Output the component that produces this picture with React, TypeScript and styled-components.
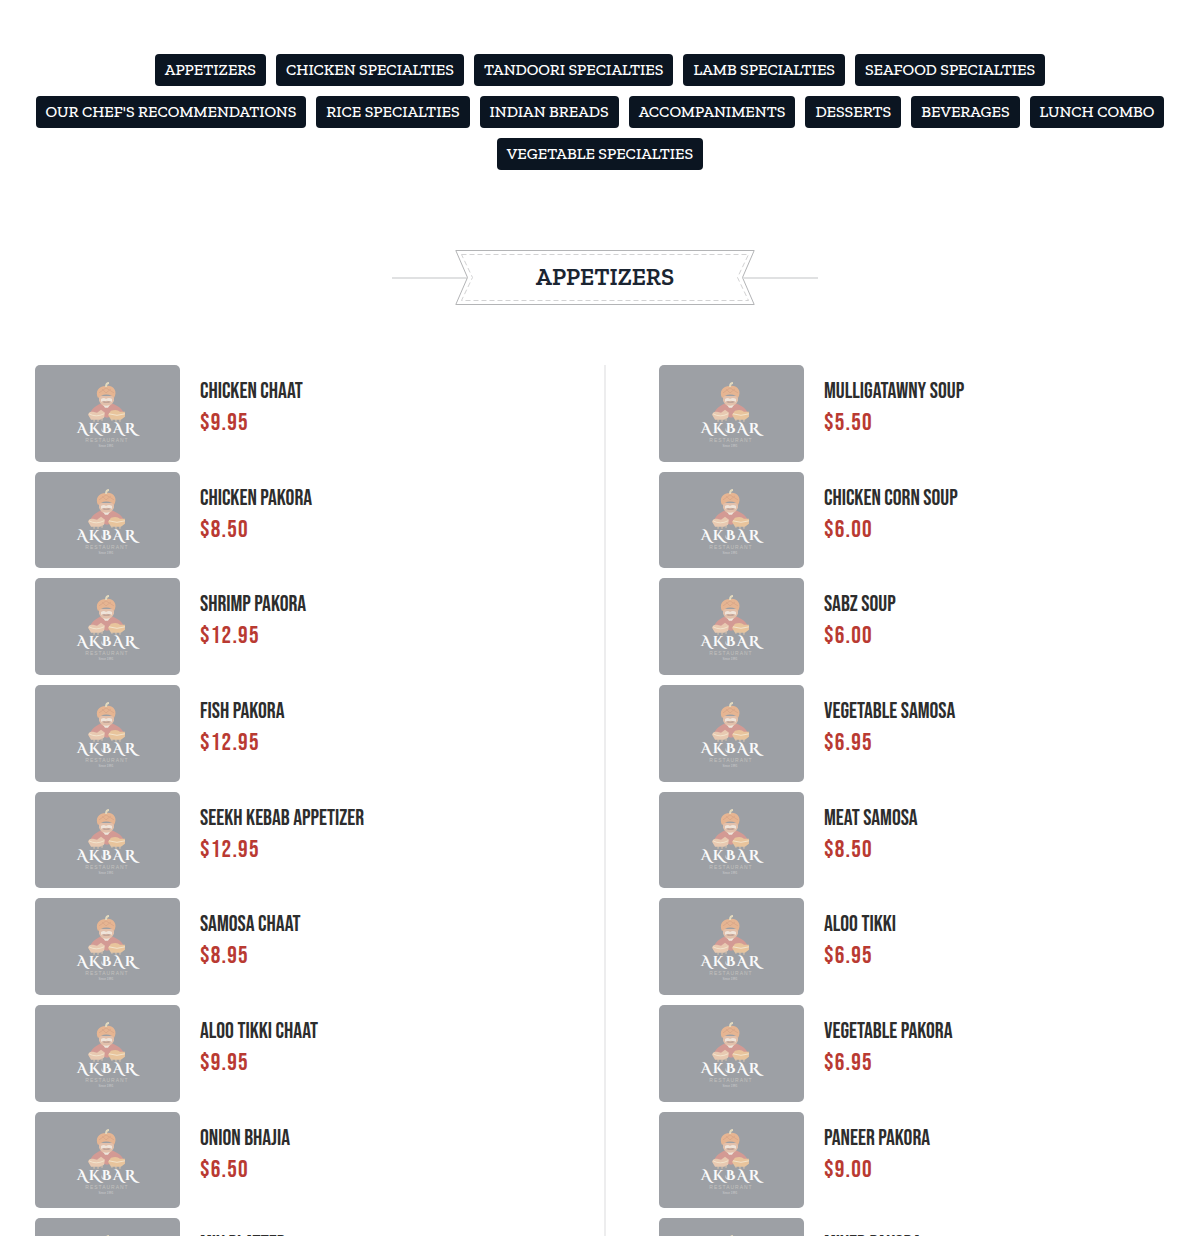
import React from 'react';
import styled, { createGlobalStyle } from 'styled-components';

const slab = '"Zilla Slab", "DejaVu Serif Condensed", "Liberation Serif", serif';
const display = '"Bebas Neue", "Roboto Condensed", "Liberation Sans", sans-serif';

const GlobalStyle = createGlobalStyle`
  *, *::before, *::after { box-sizing: border-box; }
  body { margin: 0; background: #fff; color: #2d2d2d; font-family: ${slab}; }
  h2, h3, p, ul { margin: 0; padding: 0; }
`;

const Page = styled.div`
  padding-top: 54px;
`;

const CategoryNav = styled.nav`
  display: flex;
  flex-wrap: wrap;
  justify-content: center;
  gap: 10px;
  padding: 0 15px 0 25px;
`;

const CategoryLink = styled.a`
  padding: 0 10px;
  border-radius: 4px;
  background: #0b1521;
  color: #fff;
  font-size: 16px;
  font-weight: 500;
  line-height: 32px;
  text-decoration: none;
  text-transform: uppercase;
  white-space: nowrap;
`;

const Section = styled.section`
  padding: 80px 15px 0 35px;
`;

const Banner = styled.header`
  display: flex;
  justify-content: center;
  align-items: center;
  margin-bottom: 60px;
`;

const Rule = styled.span`
  width: 75px;
  height: 2px;
  background: #e0e1e2;
`;

const Ribbon = styled.div`
  display: grid;
  justify-items: center;
  width: 300px;
  height: 55px;
  margin: 0 -12px;
  > * { grid-area: 1 / 1; }
`;

const Title = styled.h2`
  color: #1b2532;
  font-family: ${slab};
  font-size: 24px;
  font-weight: 600;
  line-height: 54px;
  text-transform: uppercase;
`;

const Columns = styled.div`
  display: grid;
  grid-template-columns: 1fr 2px 1fr;
  column-gap: 53px;
`;

const Divider = styled.div`
  background: #ededee;
`;

const DishList = styled.ul`
  display: flex;
  flex-direction: column;
  gap: 10px;
  list-style: none;
`;

const Dish = styled.li`
  display: flex;
  gap: 20px;
`;

const Thumb = styled.svg`
  flex: none;
  width: 145px;
  aspect-ratio: 3 / 2;
  border-radius: 5px;
  background: #9da0a5;
`;

const DishText = styled.div`
  padding-top: 11px;
  font-family: ${display};
`;

const DishName = styled.h3`
  color: #2d2d2d;
  font-size: 22px;
  font-weight: 400;
  line-height: 32px;
`;

const Price = styled.p`
  color: #b93a32;
  font-size: 24px;
  line-height: 30px;
  letter-spacing: 0.05em;
`;

const categories = [
  'Appetizers', 'Chicken Specialties', 'Tandoori Specialties', 'Lamb Specialties',
  'Seafood Specialties', "Our Chef's Recommendations", 'Rice Specialties', 'Indian Breads',
  'Accompaniments', 'Desserts', 'Beverages', 'Lunch Combo', 'Vegetable Specialties',
];

type Item = [name: string, price: string];

const left: Item[] = [
  ['CHICKEN CHAAT', '$9.95'], ['CHICKEN PAKORA', '$8.50'], ['SHRIMP PAKORA', '$12.95'],
  ['FISH PAKORA', '$12.95'], ['SEEKH KEBAB APPETIZER', '$12.95'], ['SAMOSA CHAAT', '$8.95'],
  ['ALOO TIKKI CHAAT', '$9.95'], ['ONION BHAJIA', '$6.50'], ['MIX PLATTER', '$12.95'],
];

const right: Item[] = [
  ['MULLIGATAWNY SOUP', '$5.50'], ['CHICKEN CORN SOUP', '$6.00'], ['SABZ SOUP', '$6.00'],
  ['VEGETABLE SAMOSA', '$6.95'], ['MEAT SAMOSA', '$8.50'], ['ALOO TIKKI', '$6.95'],
  ['VEGETABLE PAKORA', '$6.95'], ['PANEER PAKORA', '$9.00'], ['MIXED PAKORA', '$8.95'],
];

function RibbonShape() {
  return (
    <svg width="300" height="55" viewBox="0 0 300 55" fill="#fff" aria-hidden="true">
      <path d="M.8.5H299.2L287.5 27.5 299.2 54.5H.8L12.5 27.5Z" stroke="#b3b4b6" />
      <path d="M6.5 4.5H293.5L282.5 27.5 293.5 50.5H6.5L17.5 27.5Z" stroke="#d2d2d3" strokeDasharray="5 3" />
    </svg>
  );
}

function Logo() {
  return (
    <Thumb viewBox="0 0 145 97" role="img" aria-label="Akbar Restaurant">
      <path d="M54 52C55 46 59 42 65 39H78C85 42 89 46 90 52L83 50 72 53 61 50Z" fill="#d39a94" />
      <path d="M64 31H79V36Q77 41 71 42 66 41 64 36Z" fill="#e2c0ab" />
      <path d="M66 34Q69 32 71 34 74 32 77 34L77 37 72 36 66 37Z" fill="#efe4da" />
      <path d="M67 37Q69 36 71 37 74 36 76 37L74 38H69Z" fill="#b89c92" />
      <path d="M68 40Q71 42 75 40L73 43H70Z" fill="#eee6dc" />
      <path d="M63 33C60 27 63 21 71 21 79 20 83 27 79 33L77 31Q71 28 66 31Z" fill="#e6b592" />
      <path d="M64 28 71 23 79 28M67 24 71 28 76 24" stroke="#dba98a" fill="none" />
      <path d="M71 22Q71 18 74 18" stroke="#e3d9bd" strokeWidth="2" fill="none" />
      <path d="M53 50Q54 46 58 47L62 48 66 45 70 48 69 53 65 55 56 55Z" fill="#e8c9b1" />
      <path d="M73 50 76 46Q82 44 85 47L90 47 90 52 86 55H76Z" fill="#e8c49c" />
      <path d="M54 49Q61 53 69 49M74 49Q82 52 90 49" stroke="#f2e4cd" fill="none" />
      <path d="M59 54v3M63 54v3M67 53v3M77 53v3M81 54v3M85 54v3" stroke="#dec7b0" />
      <text x="72" y="68" textAnchor="middle" fill="#fafafa" fontFamily='"Cinzel Decorative", Cinzel, "Liberation Serif", serif' fontSize="14" fontWeight="700" letterSpacing="2">AKBAR</text>
      <text x="72" y="77" textAnchor="middle" fill="#c3c1be" fontFamily='"Liberation Sans", sans-serif' fontSize="5" letterSpacing="1">RESTAURANT</text>
      <text x="71" y="82" textAnchor="middle" fill="#cfcfcf" fontFamily='"Liberation Sans", sans-serif' fontSize="3">Since 1991</text>
    </Thumb>
  );
}

function DishColumn({ items }: { items: Item[] }) {
  return (
    <DishList>
      {items.map(([name, price]) => (
        <Dish key={name}>
          <Logo />
          <DishText>
            <DishName>{name}</DishName>
            <Price>{price}</Price>
          </DishText>
        </Dish>
      ))}
    </DishList>
  );
}

export default function App() {
  return (
    <Page>
      <GlobalStyle />
      <CategoryNav aria-label="Menu categories">
        {categories.map((name) => (
          <CategoryLink key={name} href={'#' + name.toLowerCase().replace(/[^a-z]+/g, '-')}>{name}</CategoryLink>
        ))}
      </CategoryNav>
      <Section id="appetizers">
        <Banner>
          <Rule />
          <Ribbon>
            <RibbonShape />
            <Title>Appetizers</Title>
          </Ribbon>
          <Rule />
        </Banner>
        <Columns>
          <DishColumn items={left} />
          <Divider />
          <DishColumn items={right} />
        </Columns>
      </Section>
    </Page>
  );
}
